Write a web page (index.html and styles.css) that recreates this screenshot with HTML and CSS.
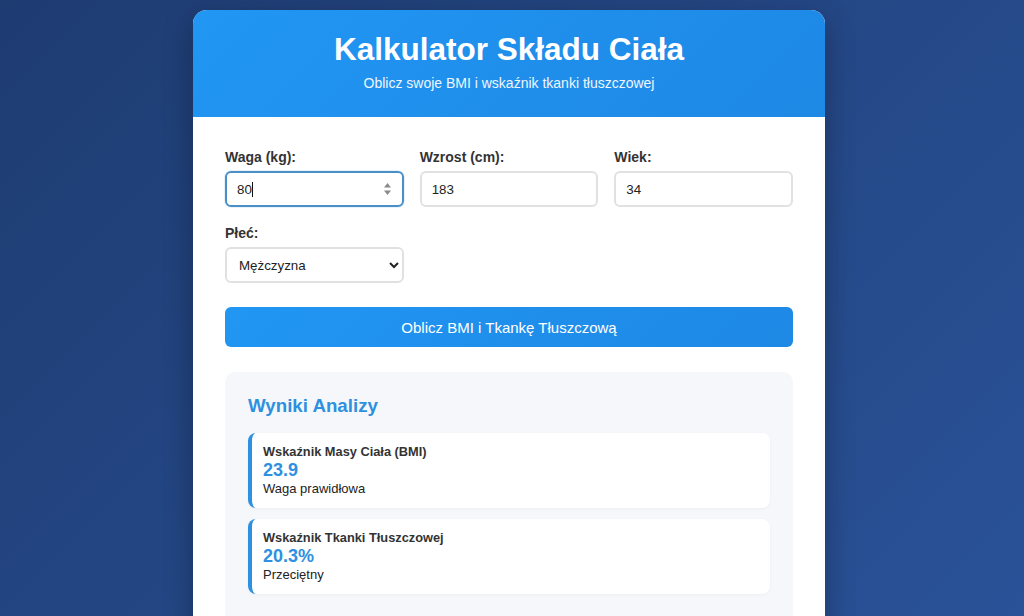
FILE: index.html
```html
<!DOCTYPE html>
<html lang="pl">
<head>
<meta charset="utf-8">
<title>Kalkulator Składu Ciała</title>
<link rel="stylesheet" href="styles.css">
</head>
<body>
<main class="container">
  <header class="header">
    <h1 class="title">Kalkulator Składu Ciała</h1>
    <p class="subtitle">Oblicz swoje BMI i wskaźnik tkanki tłuszczowej</p>
  </header>
  <section class="content">
    <div class="form-grid">
      <div class="field">
        <label class="label" for="waga">Waga (kg):</label>
        <div class="input-wrap">
          <input class="input input-focus" id="waga" type="text" value="80">
          <span class="caret"></span>
          <svg class="spinner" width="9" height="14" viewBox="0 0 9 14"><path d="M4.5 1 L8 5.5 H1 Z" fill="#8a8a8a"/><path d="M4.5 13 L8 8.5 H1 Z" fill="#8a8a8a"/></svg>
        </div>
      </div>
      <div class="field">
        <label class="label" for="wzrost">Wzrost (cm):</label>
        <input class="input" id="wzrost" type="text" value="183">
      </div>
      <div class="field">
        <label class="label" for="wiek">Wiek:</label>
        <input class="input" id="wiek" type="text" value="34">
      </div>
      <div class="field">
        <label class="label" for="plec">Płeć:</label>
        <select class="input select" id="plec">
          <option>Mężczyzna</option>
          <option>Kobieta</option>
        </select>
      </div>
    </div>
    <button class="btn">Oblicz BMI i Tkankę Tłuszczową</button>
    <div class="results">
      <h3 class="results-title">Wyniki Analizy</h3>
      <div class="card">
        <div class="card-title">Wskaźnik Masy Ciała (BMI)</div>
        <div class="card-value">23.9</div>
        <div class="card-desc">Waga prawidłowa</div>
      </div>
      <div class="card">
        <div class="card-title">Wskaźnik Tkanki Tłuszczowej</div>
        <div class="card-value">20.3%</div>
        <div class="card-desc">Przeciętny</div>
      </div>
    </div>
  </section>
</main>
</body>
</html>
```
FILE: styles.css
```css
html, body {
  margin: 0;
  height: 100%;
  overflow: hidden;
}
body {
  font-family: "Liberation Sans", Arial, sans-serif;
  background: linear-gradient(135deg, #1e3c72 0%, #2a5298 100%);
  display: flex;
  justify-content: center;
  align-items: flex-start;
  padding: 10px 6px 0 0;
  box-sizing: border-box;
}
.container {
  width: 632px;
  background: #fff;
  border-radius: 14px;
  overflow: hidden;
  box-shadow: 0 10px 30px rgba(0, 0, 0, 0.3);
  flex-shrink: 0;
}
.header {
  background: linear-gradient(135deg, #2196f3 0%, #1e88e5 100%);
  color: #fff;
  text-align: center;
  padding: 20px 20px 25px;
}
.title {
  margin: 0;
  font-size: 31.5px;
  line-height: 38px;
  font-weight: bold;
}
.subtitle {
  margin: 7px 0 0;
  font-size: 14px;
  line-height: 17px;
  opacity: 0.92;
}
.content {
  padding: 32px 32px 40px;
}
.form-grid {
  display: grid;
  grid-template-columns: repeat(3, 1fr);
  column-gap: 16px;
  row-gap: 18px;
}
.field {
  display: flex;
  flex-direction: column;
}
.label {
  font-size: 14px;
  line-height: 16px;
  font-weight: bold;
  color: #333;
  margin-bottom: 6px;
}
.input-wrap {
  position: relative;
}
.input {
  width: 100%;
  box-sizing: border-box;
  height: 36px;
  border: 2px solid #e1e1e1;
  border-radius: 6px;
  padding: 0 10px;
  font-family: "Liberation Sans", Arial, sans-serif;
  font-size: 13.33px;
  color: #222;
  background: #fff;
  outline: none;
}
.input-focus {
  border-color: #4a90c8;
  box-shadow: 0 0 0 1px rgba(74, 144, 200, 0.12);
}
.caret {
  position: absolute;
  left: 27px;
  top: 11px;
  width: 1px;
  height: 15px;
  background: #111;
}
.spinner {
  position: absolute;
  right: 12px;
  top: 11px;
}
.select {
  padding: 0 6px 0 8px;
  color: #222;
}
.btn {
  display: block;
  width: 100%;
  height: 40px;
  margin-top: 24px;
  border: none;
  border-radius: 6px;
  background: linear-gradient(135deg, #2196f3 0%, #1e88e5 100%);
  color: #fff;
  font-family: "Liberation Sans", Arial, sans-serif;
  font-size: 15px;
}
.results {
  margin-top: 25px;
  background: #f5f7fa;
  border-radius: 10px;
  padding: 23px 23px 24px;
}
.results-title {
  margin: 0 0 16px;
  font-size: 18.72px;
  line-height: 22px;
  color: #2e90e0;
  font-weight: bold;
}
.card {
  background: #fff;
  border-left: 4px solid #2e90e0;
  border-radius: 8px;
  padding: 11px 11px 12px;
  margin-bottom: 11px;
  box-shadow: 0 1px 3px rgba(0, 0, 0, 0.04);
}
.card-title {
  font-size: 12.8px;
  line-height: 16px;
  font-weight: bold;
  color: #333;
}
.card-value {
  font-size: 18px;
  line-height: 21px;
  font-weight: bold;
  color: #2e90e0;
}
.card-desc {
  font-size: 13px;
  line-height: 15px;
  color: #222;
}
```
